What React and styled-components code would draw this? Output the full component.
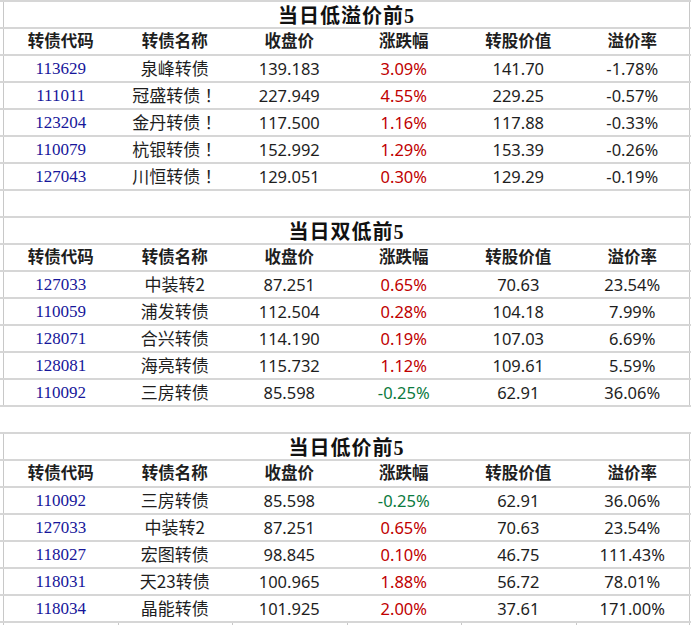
import React from "react";
import styled, { createGlobalStyle } from "styled-components";

const Global = createGlobalStyle`
  html, body { margin: 0; padding: 0; background: #ffffff; }
  body { width: 691px; height: 625px; overflow: hidden; }
`;

const LINE_H = "#d6d6d6";
const LINE_V = "#c8c8c8";

const Sheet = styled.div`
  width: 691px;
  display: flex;
  flex-direction: column;
`;

const Section = styled.div`
  display: flex;
  flex-direction: column;
  border-top: ${(p) => (p.$noTop ? "none" : `2px solid ${LINE_H}`)};
`;

const Row = styled.div`
  display: grid;
  grid-template-columns: repeat(6, 1fr);
  padding: 0 1px 0 3px;
  height: ${(p) => p.$h || 27}px;
  box-sizing: border-box;
  border-bottom: ${(p) => (p.$noLine ? "none" : `2px solid ${LINE_H}`)};
`;

const Cell = styled.div`
  display: flex;
  align-items: center;
  justify-content: center;
  white-space: nowrap;
  overflow: hidden;
  &:first-child { border-left: 1px solid ${LINE_V}; }
  &:last-child { border-right: 1px solid ${LINE_V}; }
`;

const BlankCell = styled(Cell)`
  grid-column: 1 / -1;
`;

const EmptyCell = styled(Cell)`
  border-left: 1px solid ${LINE_V};
`;

const TitleCell = styled(Cell)`
  grid-column: 1 / -1;
  font-family: "Liberation Serif", "Noto Sans CJK SC", serif;
  font-weight: 700;
  font-size: 20px;
  color: #111;
  letter-spacing: 1px;
  padding-bottom: 1px;
`;

const HeadCell = styled(Cell)`
  font-family: "Noto Sans CJK SC", sans-serif;
  font-weight: 700;
  font-size: 16.5px;
  color: #1e1e1e;
  padding-bottom: 3px;
`;

const CodeCell = styled(Cell)`
  font-family: "Liberation Serif", serif;
  font-size: 17px;
  color: #16169a;
`;

const NameCell = styled(Cell)`
  font-family: "Noto Sans CJK SC", sans-serif;
  font-size: 17px;
  color: #1e1e1e;
  padding-bottom: 2px;
`;

const Bang = styled.span`
  display: inline-block;
  width: 1em;
  text-align: center;
  font-family: "Noto Sans CJK TC", "Noto Sans CJK SC", sans-serif;
`;

const NumCell = styled(Cell)`
  font-family: "Noto Sans", "Noto Sans CJK SC", sans-serif;
  font-size: 16.5px;
  color: ${(p) => p.$color || "#1e1e1e"};
`;

const Spacer = styled.div`
  height: 25px;
`;

const HEAD = ["转债代码", "转债名称", "收盘价", "涨跌幅", "转股价值", "溢价率"];

const sections = [
  {
    title: "当日低溢价前5",
    rows: [
      ["113629", "泉峰转债", "139.183", "3.09%", "141.70", "-1.78%"],
      ["111011", "冠盛转债！", "227.949", "4.55%", "229.25", "-0.57%"],
      ["123204", "金丹转债！", "117.500", "1.16%", "117.88", "-0.33%"],
      ["110079", "杭银转债！", "152.992", "1.29%", "153.39", "-0.26%"],
      ["127043", "川恒转债！", "129.051", "0.30%", "129.29", "-0.19%"],
    ],
  },
  {
    title: "当日双低前5",
    rows: [
      ["127033", "中装转2", "87.251", "0.65%", "70.63", "23.54%"],
      ["110059", "浦发转债", "112.504", "0.28%", "104.18", "7.99%"],
      ["128071", "合兴转债", "114.190", "0.19%", "107.03", "6.69%"],
      ["128081", "海亮转债", "115.732", "1.12%", "109.61", "5.59%"],
      ["110092", "三房转债", "85.598", "-0.25%", "62.91", "36.06%"],
    ],
  },
  {
    title: "当日低价前5",
    rows: [
      ["110092", "三房转债", "85.598", "-0.25%", "62.91", "36.06%"],
      ["127033", "中装转2", "87.251", "0.65%", "70.63", "23.54%"],
      ["118027", "宏图转债", "98.845", "0.10%", "46.75", "111.43%"],
      ["118031", "天23转债", "100.965", "1.88%", "56.72", "78.01%"],
      ["118034", "晶能转债", "101.925", "2.00%", "37.61", "171.00%"],
    ],
  },
];

const changeColor = (v) => (v.startsWith("-") ? "#0b7a3e" : "#c00000");

function Name({ text }) {
  if (text.endsWith("！")) {
    return (
      <NameCell>
        {text.slice(0, -1)}
        <Bang>！</Bang>
      </NameCell>
    );
  }
  return <NameCell>{text}</NameCell>;
}

function Table({ title, rows, noTop, children }) {
  return (
    <Section $noTop={noTop}>
      <Row>
        <TitleCell>{title}</TitleCell>
      </Row>
      <Row>
        {HEAD.map((h) => (
          <HeadCell key={h}>{h}</HeadCell>
        ))}
      </Row>
      {rows.map((r, i) => (
        <Row key={i}>
          <CodeCell>{r[0]}</CodeCell>
          <Name text={r[1]} />
          <NumCell>{r[2]}</NumCell>
          <NumCell $color={changeColor(r[3])}>{r[3]}</NumCell>
          <NumCell>{r[4]}</NumCell>
          <NumCell>{r[5]}</NumCell>
        </Row>
      ))}
      {children}
    </Section>
  );
}

export default function App() {
  return (
    <>
      <Global />
      <Sheet>
        <Table title={sections[0].title} rows={sections[0].rows}>
          <Row>
            <BlankCell />
          </Row>
        </Table>
        <Table title={sections[1].title} rows={sections[1].rows} noTop />
        <Spacer />
        <Table title={sections[2].title} rows={sections[2].rows}>
          <Row $h={6} $noLine>
            {HEAD.map((h) => (
              <EmptyCell key={h} />
            ))}
          </Row>
        </Table>
      </Sheet>
    </>
  );
}
